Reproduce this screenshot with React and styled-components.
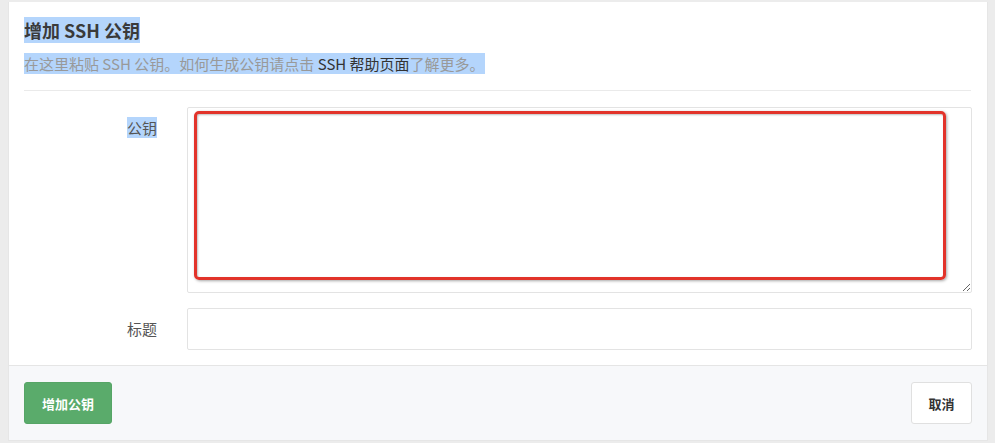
import styled, { createGlobalStyle } from 'styled-components';

const GlobalStyle = createGlobalStyle`
    html, body {
        margin: 0;
        padding: 0;
        background: #ececec;
        font-family: "Noto Sans CJK SC", "Noto Sans", sans-serif;
    }
    * { box-sizing: border-box; }
`

const Page = styled.div`
    padding: 2px 7px 3px 8px;
`

const Card = styled.div`
    background: #ffffff;
    border: 1px solid #e6e6e6;
    border-top: none;
`

const Header = styled.div`
    margin: 0 16px 0 15px;
    padding: 16px 0 16px;
    border-bottom: 1px solid #eaeaea;
`

const Title = styled.h3`
    margin: 0;
    font-size: 18px;
    line-height: 24px;
    font-weight: 700;
    color: #3a3a3a;
`

const Desc = styled.p`
    margin: 11px 0 0;
    font-size: 15px;
    line-height: 21px;
    color: #999999;
`

const Selected = styled.span`
    background: #b4d5fc;
`

const Link = styled.a`
    color: #333333;
    text-decoration: none;
`

const Form = styled.div`
    padding: 16px 15px 15px 15px;
    display: flex;
    flex-direction: column;
    gap: 15px;
`

const Row = styled.div`
    display: grid;
    grid-template-columns: 163px 1fr;
`

const Label = styled.label`
    text-align: right;
    padding: ${p => p.$top}px 30px 0 0;
    font-size: 15px;
    line-height: 20px;
    color: #555555;
`

const FieldWrap = styled.div`
    position: relative;
`

const TextArea = styled.textarea`
    display: block;
    width: 100%;
    height: 186px;
    border: 1px solid #e3e3e3;
    border-radius: 2px;
    resize: vertical;
    outline: none;
    font-family: inherit;
`

const Input = styled.input`
    display: block;
    width: 100%;
    height: 42px;
    border: 1px solid #e3e3e3;
    border-radius: 2px;
    outline: none;
`

const Annotation = styled.div`
    position: absolute;
    left: 7px;
    top: 4px;
    width: 752px;
    height: 169px;
    border: 3px solid #e2332a;
    border-radius: 5px;
    box-shadow: 1px 1px 3px rgba(0, 0, 0, 0.35), inset 1px 1px 2px rgba(0, 0, 0, 0.25);
    pointer-events: none;
`

const Footer = styled.div`
    background: #f7f8fa;
    border-top: 1px solid #e5e5e5;
    padding: 16px 15px 16px 15px;
    display: flex;
    justify-content: space-between;
`

const Button = styled.button`
    height: 42px;
    padding: 0 ${p => p.$pad}px;
    border-radius: 3px;
    font-family: inherit;
    font-size: 13px;
    font-weight: 700;
    cursor: pointer;
    background: ${p => p.$primary ? '#5aab6b' : '#ffffff'};
    color: ${p => p.$primary ? '#ffffff' : '#333333'};
    border: 1px solid ${p => p.$primary ? '#56a566' : '#e0e0e0'};
`

function App(){
    return (
        <Page>
            <GlobalStyle />
            <Card>
                <Header>
                    <Title><Selected>增加 SSH 公钥</Selected></Title>
                    <Desc>
                        <Selected>
                            在这里粘贴 SSH 公钥。如何生成公钥请点击 <Link href="#">SSH 帮助页面</Link>了解更多。
                        </Selected>
                    </Desc>
                </Header>
                <Form>
                    <Row>
                        <Label $top={11}><Selected>公钥</Selected></Label>
                        <FieldWrap>
                            <TextArea />
                            <Annotation />
                        </FieldWrap>
                    </Row>
                    <Row>
                        <Label $top={11}>标题</Label>
                        <Input />
                    </Row>
                </Form>
                <Footer>
                    <Button $primary $pad={17}>增加公钥</Button>
                    <Button $pad={16.5}>取消</Button>
                </Footer>
            </Card>
        </Page>
    )
}

export default App;
